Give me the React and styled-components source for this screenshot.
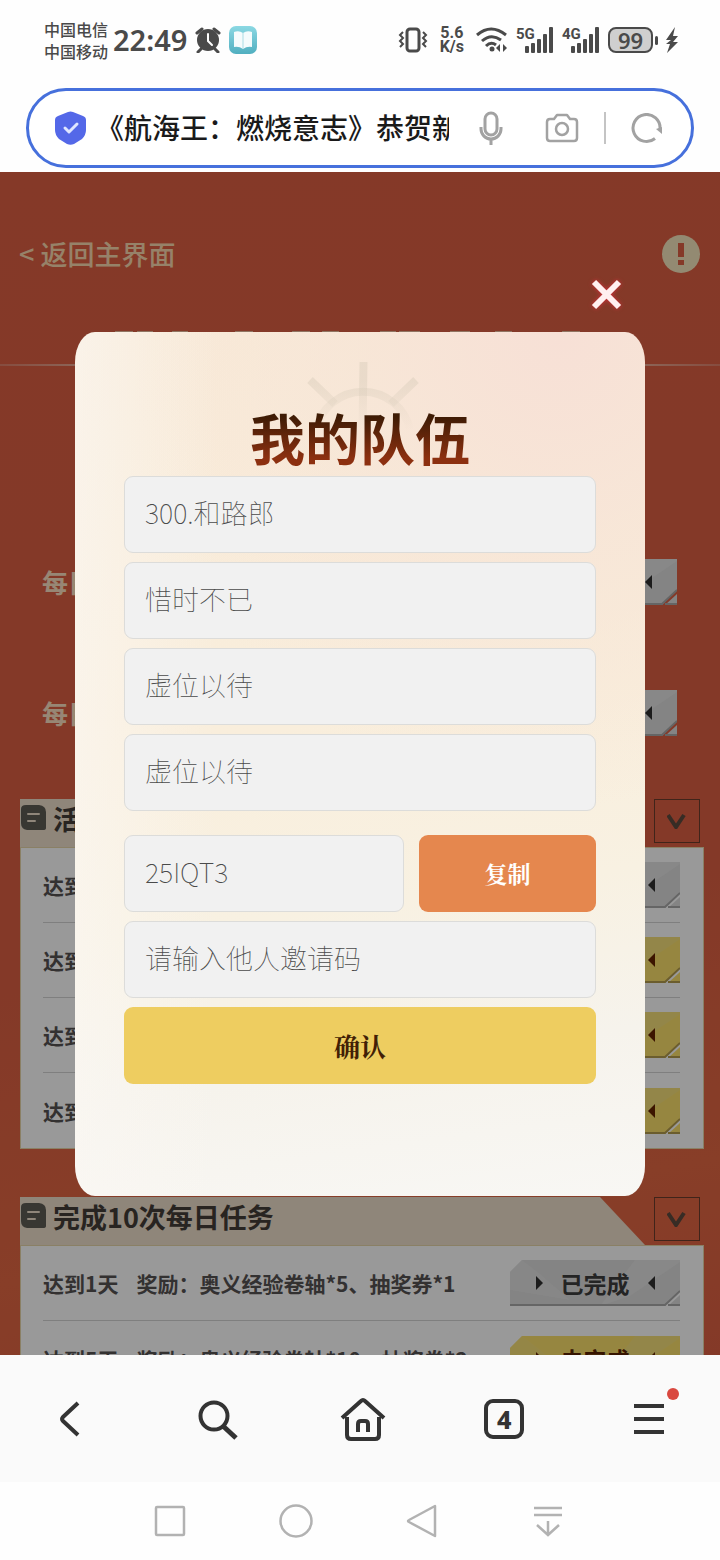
import React from "react";
import styled, { createGlobalStyle } from "styled-components";

const sans = '"Noto Sans CJK SC", sans-serif';
const latin = '"Noto Sans", "Noto Sans CJK SC", sans-serif';
const serif = '"Noto Serif CJK SC", "Noto Sans CJK SC", serif';

const GlobalStyle = createGlobalStyle`
  * { box-sizing: border-box; }
  body { margin: 0; font-family: ${sans}; background: #fefefe; }
  button { border: 0; padding: 0; background: none; font-family: inherit; cursor: pointer; }
  svg { display: block; flex: none; }
  h1, h2, p { margin: 0; }
`;

const Screen = styled.div`
  display: flex;
  flex-direction: column;
  height: 100vh;
`;

/* ---------- status bar ---------- */

const StatusBar = styled.header`
  display: flex;
  align-items: center;
  justify-content: space-between;
  height: 80px;
  padding: 0 42px 0 44px;
  color: #4a4a4a;
`;

const StatusGroup = styled.div`
  display: flex;
  align-items: center;
  gap: ${(p) => p.$gap}px;
`;

const Carriers = styled.div`
  font-size: 16px;
  font-weight: 500;
  line-height: 22px;
`;

const Clock = styled.time`
  font-family: ${latin};
  font-size: 29px;
  font-weight: 600;
  line-height: 40px;
`;

const Speed = styled.div`
  font-family: Roboto, sans-serif;
  font-size: 16px;
  font-weight: 700;
  line-height: 14px;
  text-align: center;
`;

const SignalBox = styled.div`
  position: relative;
  padding-left: 9px;
`;

const SignalLabel = styled.span`
  position: absolute;
  left: 0;
  top: 0;
  font-family: Roboto, sans-serif;
  font-size: 15px;
  font-weight: 700;
  line-height: 14px;
`;

const Battery = styled.div`
  display: flex;
  align-items: center;
  gap: 2px;
  &::after {
    content: "";
    width: 3px;
    height: 9px;
    border-radius: 2px;
    background: #4a4a4a;
  }
`;

const BatteryLevel = styled.span`
  width: 45px;
  height: 26px;
  border: 2px solid #4a4a4a;
  border-radius: 8px;
  background: #cfcfcf;
  font-family: ${latin};
  font-size: 22px;
  font-weight: 600;
  line-height: 22px;
  text-align: center;
`;

function Signal({ label }) {
  return (
    <SignalBox>
      <SignalLabel>{label}</SignalLabel>
      <svg width="29" height="26" viewBox="0 0 29 26" fill="#4a4a4a">
        <rect x="0" y="19" width="4" height="7" rx="1" />
        <rect x="6" y="16" width="4" height="10" rx="1" />
        <rect x="12" y="12" width="4" height="14" rx="1" />
        <rect x="18" y="7" width="4" height="19" rx="1" />
        <rect x="24" y="0" width="4" height="26" rx="1" />
      </svg>
    </SignalBox>
  );
}

/* ---------- address bar ---------- */

const AddressBar = styled.form`
  display: flex;
  align-items: center;
  height: 80px;
  flex: none;
  margin: 8px 26px 4px;
  padding: 0 29px 0 26px;
  border: 3px solid #4670dc;
  border-radius: 40px;
  background: #fff;
`;

const AddressInput = styled.input`
  flex: 1;
  min-width: 0;
  margin: 0 30px 0 10px;
  padding: 0 0 2px;
  border: 0;
  outline: 0;
  background: none;
  color: #1a1a1a;
  font: 500 28px/40px ${sans};
`;

const AddressActions = styled.div`
  display: flex;
  align-items: center;
  gap: 25px;
`;

const ActionPair = styled.div`
  display: flex;
  align-items: center;
  gap: 42px;
`;

const ActionDivider = styled.span`
  width: 2px;
  height: 32px;
  background: #c4c4c4;
`;

/* ---------- web page under the dialog ---------- */

const Viewport = styled.main`
  position: relative;
  flex: 1;
  min-height: 0;
  overflow: hidden;
  background: linear-gradient(170deg, #de6044 0%, #dc5f44 60%, #e36844 85%, #dd6044 100%);
`;

const PageNav = styled.nav`
  display: flex;
  align-items: center;
  justify-content: space-between;
  padding: 63px 20px 0 19px;
`;

const BackLink = styled.a`
  color: #fbd9b0;
  font-size: 27px;
  font-weight: 500;
  line-height: 38px;
  text-decoration: none;
`;

const Banner = styled.svg`
  width: 100%;
  height: 6px;
  margin-top: 57px;
`;

const BannerRule = styled.hr`
  height: 2px;
  margin: 28px 0 0;
  border: 0;
  background: linear-gradient(90deg, #e0806a, #f2c9b4 20%, #f2c9b4 80%, #e0806a);
`;

const DailyList = styled.section`
  display: flex;
  flex-direction: column;
  gap: 85px;
  margin: 193px 43px 63px 42px;
`;

const DailyRow = styled.div`
  display: flex;
  align-items: center;
  justify-content: space-between;
  color: #fce2c4;
  font-size: 26px;
  font-weight: 700;
  line-height: 44px;
`;

const Section = styled.section`
  margin: 0 16px 48px 20px;
`;

const SectionHead = styled.div`
  display: flex;
  align-items: flex-start;
  height: 48px;
  padding-right: 4px;
`;

const SectionTitle = styled.h2`
  display: flex;
  flex: 1;
  gap: 7px;
  height: 48px;
  margin-right: 9px;
  padding-left: 1px;
  background: #eedfcb;
  clip-path: polygon(0 0, calc(100% - 45px) 0, 100% 100%, 0 100%);
  color: #443c38;
  font-size: 27px;
  font-weight: 700;
  line-height: 40px;
  svg { margin-top: 6px; }
`;

const FoldButton = styled.button`
  display: grid;
  place-items: center;
  width: 46px;
  height: 44px;
  border: 1px solid #6b3c2c;
`;

const Card = styled.div`
  padding: 0 23px 0 22px;
  border: 1px solid #e6d6a8;
  background: #fff;
`;

const TaskRow = styled.div`
  display: flex;
  align-items: center;
  justify-content: space-between;
  height: 75px;
  border-bottom: 1px solid #d4d4d4;
  color: #565252;
  font-size: 21px;
  font-weight: 700;
  &:last-child { border-bottom: 0; }
`;

const TaskText = styled.p`
  display: flex;
  gap: 18px;
`;

const BadgeButton = styled.button`
  position: relative;
  width: 170px;
  height: 46px;
  color: ${(p) => (p.$done ? "#3c3c3c" : "#5a2200")};
  font-size: 23px;
  font-weight: 700;
  line-height: 46px;
`;

const BadgeShape = styled.svg`
  position: absolute;
  inset: 0;
`;

const BadgeLabel = styled.span`
  position: relative;
`;

function StateButton({ done }) {
  const ink = done ? "#303030" : "#642400";
  const base = done ? "#dcdcdc" : "#fbe06c";
  const shine = done ? "#e8e8e8" : "#f2df86";
  const edge = done ? "#a8a8a8" : "#b39b4e";
  return (
    <BadgeButton type="button" $done={done}>
      <BadgeShape width="170" height="46" viewBox="0 0 170 46">
        <path d="M12 0H170V31L155 46H0V12Z" fill={base} />
        <path d="M90 46L125 0H170V2L120 36Z" fill={shine} opacity=".6" />
        <path d="M12 0L0 12V30L60 40L30 14Z" fill={shine} opacity=".4" />
        <path d="M170 31L155 45H0" fill="none" stroke={edge} strokeWidth="2" />
        <path d="M170 35V46H158Z" fill={base} />
        <path d="M170 45H158" stroke={edge} strokeWidth="2" />
        <path d="M26 16L33 23L26 30Z" fill={ink} />
        <path d="M145 16L138 23L145 30Z" fill={ink} />
      </BadgeShape>
      <BadgeLabel>{done ? "已完成" : "未完成"}</BadgeLabel>
    </BadgeButton>
  );
}

function Task({ goal, reward, done }) {
  return (
    <TaskRow>
      <TaskText>
        <span>{goal}</span>
        {reward && <span>{reward}</span>}
      </TaskText>
      <StateButton done={done} />
    </TaskRow>
  );
}

function TaskSection({ title, tasks }) {
  return (
    <Section>
      <SectionHead>
        <SectionTitle>
          <svg width="25" height="25" viewBox="0 0 25 25">
            <path d="M5 0H18Q25 1 25 7V23Q25 25 22 25H6Q0 24 0 18V4Q0 0 5 0Z" fill="#5e5c54" />
            <path d="M7 9H18M7 16H14" stroke="#eedfcb" strokeWidth="2" strokeLinecap="round" />
          </svg>
          {title}
        </SectionTitle>
        <FoldButton type="button" aria-label="展开">
          <svg width="20" height="16" viewBox="0 0 20 16">
            <path d="M1 2L9 14L17 2" fill="none" stroke="#5c4a3e" strokeWidth="4" />
          </svg>
        </FoldButton>
      </SectionHead>
      <Card>
        {tasks.map((t, i) => (
          <Task key={i} {...t} />
        ))}
      </Card>
    </Section>
  );
}

/* ---------- team dialog ---------- */

const Backdrop = styled.div`
  position: absolute;
  inset: 0;
  display: flex;
  flex-direction: column;
  gap: 21px;
  padding: 106px 75px 0;
  background: rgba(0, 0, 0, 0.4);
`;

const CloseButton = styled.button`
  align-self: flex-end;
  margin-right: 22px;
  filter: drop-shadow(0 0 2px #d8303c);
`;

const Dialog = styled.section`
  position: relative;
  display: flex;
  flex-direction: column;
  gap: 9px;
  padding: 72px 49px 112px;
  border-radius: 20px / 30px;
  background:
    linear-gradient(90deg, rgba(251, 248, 244, 0.6), rgba(251, 248, 244, 0) 25%),
    radial-gradient(ellipse 75% 55% at 85% 0%, #f7e0d6, rgba(247, 228, 214, 0.7) 45%, rgba(248, 236, 220, 0) 100%),
    linear-gradient(172deg, #f8ead8 0%, #f9eedc 45%, #f8f1e2 65%, #f6f3ec 82%, #f8f7f4 100%);
`;

const Wheel = styled.svg`
  position: absolute;
  top: 28px;
  left: calc(50% - 57px);
`;

const DialogTitle = styled.h1`
  position: relative;
  margin-bottom: -1px;
  background: linear-gradient(180deg, #3f1c05 20%, #8c3010 85%);
  background-clip: text;
  -webkit-background-clip: text;
  color: transparent;
  font-size: 55px;
  font-weight: 700;
  line-height: 64px;
  text-align: center;
`;

const Field = styled.input`
  display: block;
  width: 100%;
  min-width: 0;
  height: 77px;
  padding: 0 20px 4px;
  border: 1px solid #dcdcda;
  border-radius: 9px;
  outline: 0;
  background: #f1f1f1;
  color: #4a4a4a;
  font: 100 27px/40px ${sans};
  &::placeholder { color: #4a4a4a; opacity: 1; }
`;

const CodeRow = styled.div`
  display: grid;
  grid-template-columns: 280fr 177fr;
  gap: 15px;
  margin-top: 15px;
`;

const ActionButton = styled.button`
  height: 77px;
  border-radius: 9px;
  background: ${(p) => (p.$primary ? "#eecd60" : "#e5874e")};
  color: ${(p) => (p.$primary ? "#421f06" : "#fff")};
  font-family: ${serif};
  font-size: ${(p) => (p.$primary ? 26 : 23)}px;
  font-weight: 700;
`;

/* ---------- bottom bars ---------- */

const ToolBar = styled.nav`
  display: flex;
  flex: none;
  align-items: center;
  justify-content: space-between;
  height: 127px;
  padding: 0 47px 0 46px;
  background: #fafafa;
`;

const SystemBar = styled.nav`
  display: flex;
  flex: none;
  align-items: center;
  justify-content: space-between;
  height: 78px;
  padding: 0 148px 0 146px;
  background: #fefefe;
`;

const BarButton = styled.button`
  position: relative;
  display: grid;
  place-items: center;
  width: 48px;
  height: 48px;
`;

const TabCount = styled.span`
  width: 40px;
  height: 40px;
  border: 4px solid #333;
  border-radius: 9px;
  color: #333;
  font-family: ${latin};
  font-size: 25px;
  font-weight: 800;
  line-height: 32px;
  text-align: center;
`;

const Dot = styled.span`
  position: absolute;
  top: -7px;
  right: -6px;
  width: 12px;
  height: 12px;
  border-radius: 50%;
  background: #d9483f;
`;

const members = ["300.和路郎", "惜时不已", "虚位以待", "虚位以待"];

const activityTasks = [
  { goal: "达到", done: true },
  { goal: "达到", done: false },
  { goal: "达到", done: false },
  { goal: "达到", done: false },
];

const dailyTasks = [
  { goal: "达到1天", reward: "奖励：奥义经验卷轴*5、抽奖券*1", done: true },
  { goal: "达到5天", reward: "奖励：奥义经验卷轴*10、抽奖券*2", done: false },
];

export default function App() {
  return (
    <Screen>
      <GlobalStyle />
      <StatusBar>
        <StatusGroup $gap={8}>
          <StatusGroup $gap={5}>
            <Carriers>
              <div>中国电信</div>
              <div>中国移动</div>
            </Carriers>
            <Clock>22:49</Clock>
          </StatusGroup>
          <svg width="26" height="26" viewBox="0 0 26 26">
            <circle cx="13" cy="13" r="11" fill="#4a4a4a" />
            <path d="M2 6L7 2M24 6L19 2M6 22L3 25M20 22L23 25" stroke="#4a4a4a" strokeWidth="3" strokeLinecap="round" />
            <path d="M13 7V14L17 18" fill="none" stroke="#fff" strokeWidth="2" strokeLinecap="round" />
          </svg>
          <svg width="28" height="28" viewBox="0 0 28 28">
            <defs>
              <linearGradient id="book" x1="0" y1="0" x2="0" y2="1">
                <stop offset="0" stopColor="#8bd8e3" />
                <stop offset="1" stopColor="#51afc0" />
              </linearGradient>
            </defs>
            <rect width="28" height="28" rx="7" fill="url(#book)" />
            <path d="M5 6Q10 4 14 7Q18 4 23 6V21Q18 20 14 23Q10 20 5 21Z" fill="#f4fbfc" />
            <path d="M14 7V23" stroke="#a9dce4" />
          </svg>
        </StatusGroup>
        <StatusGroup $gap={8}>
          <StatusGroup $gap={12}>
            <svg width="30" height="26" viewBox="0 0 30 26" fill="none" stroke="#4a4a4a">
              <rect x="9" y="2" width="12" height="22" rx="3" strokeWidth="3" />
              <path d="M5 5L2 8L5 11L2 14L5 17L2 20M25 5L28 8L25 11L28 14L25 17L28 20" strokeWidth="2" />
            </svg>
            <Speed>
              <div>5.6</div>
              <div>K/s</div>
            </Speed>
            <svg width="32" height="26" viewBox="0 0 32 26" fill="none" stroke="#4a4a4a" strokeWidth="3">
              <path d="M1 8Q15 -4 30 8M6 14Q15 6 25 13M10 19Q15 14 20 18" />
              <circle cx="16" cy="22" r="2.5" fill="#4a4a4a" stroke="none" />
              <path d="M24 17V25L20 21ZM27 17V25L31 21Z" fill="#4a4a4a" stroke="none" />
            </svg>
          </StatusGroup>
          <Signal label="5G" />
          <Signal label="4G" />
          <Battery>
            <BatteryLevel>99</BatteryLevel>
          </Battery>
          <svg width="12" height="26" viewBox="0 0 12 26" fill="#4a4a4a">
            <path d="M9 0L0 13H5L0 17H4L1 26L12 15H7L12 9H7Z" />
          </svg>
        </StatusGroup>
      </StatusBar>

      <AddressBar>
        <svg width="31" height="34" viewBox="0 0 31 34">
          <path d="M13 1Q15.500 0 18 1L28 5Q31 6 31 9V19Q31 24 27 28L19 33Q15.500 34.500 12 33L4 28Q0 24 0 19V9Q0 6 3 5Z" fill="#5468e8" />
          <path d="M10 17L14 21L22 13" fill="none" stroke="#dfe6ff" strokeWidth="3" strokeLinecap="round" strokeLinejoin="round" />
        </svg>
        <AddressInput aria-label="网址" readOnly value="《航海王：燃烧意志》恭贺新" />
        <AddressActions>
          <ActionPair>
            <button type="button" aria-label="语音">
              <svg width="24" height="34" viewBox="0 0 24 34" fill="none" stroke="#a2a2a2" strokeWidth="3">
                <rect x="6" y="2" width="12" height="22" rx="6" />
                <path d="M2 16V18A10 10 0 0 0 22 18V16M12 28V34" />
              </svg>
            </button>
            <button type="button" aria-label="拍照">
              <svg width="34" height="30" viewBox="0 0 34 30" fill="none" stroke="#a2a2a2" strokeWidth="2.500">
                <path d="M5 6H9L12 2H22L25 6H29Q32 6 32 9V25Q32 28 29 28H5Q2 28 2 25V9Q2 6 5 6Z" strokeLinejoin="round" />
                <circle cx="17" cy="16" r="6" />
              </svg>
            </button>
          </ActionPair>
          <ActionDivider />
          <button type="button" aria-label="刷新">
            <svg width="31" height="31" viewBox="0 0 31 31">
              <path d="M24 25.500A13.500 13.500 0 1 1 29 16" fill="none" stroke="#a2a2a2" strokeWidth="3" />
              <path d="M25 16L31 14V21Z" fill="#a2a2a2" />
            </svg>
          </button>
        </AddressActions>
      </AddressBar>

      <Viewport>
        <PageNav>
          <BackLink href="#">&lt; 返回主界面</BackLink>
          <svg width="38" height="38" viewBox="0 0 38 38">
            <circle cx="19" cy="19" r="19" fill="#f6e6bf" />
            <path d="M16 8H22V22H16ZM16 25H22V30H16Z" fill="#de6044" />
          </svg>
        </PageNav>
        <Banner viewBox="0 0 720 6" preserveAspectRatio="none">
          <path
            d="M115 3H133M137 3H153M172 3H188M235 3H253M292 3H310M322 3H339M380 3H396M399 3H420M450 3H470M495 3H512M562 3H580"
            stroke="#f0c3a4"
            strokeWidth="4"
          />
        </Banner>
        <BannerRule />
        <DailyList>
          <DailyRow>
            每日
            <StateButton done />
          </DailyRow>
          <DailyRow>
            每日
            <StateButton done />
          </DailyRow>
        </DailyList>
        <TaskSection title="活动" tasks={activityTasks} />
        <TaskSection title="完成10次每日任务" tasks={dailyTasks} />

        <Backdrop>
          <CloseButton type="button" aria-label="关闭">
            <svg width="33" height="33" viewBox="0 0 33 33">
              <path d="M4 4L29 29M29 4L4 29" stroke="#fff0f0" strokeWidth="6" />
            </svg>
          </CloseButton>
          <Dialog role="dialog" aria-labelledby="team-title">
            <Wheel width="120" height="70" viewBox="0 0 120 70">
              <defs>
                <linearGradient id="wheel" gradientUnits="userSpaceOnUse" x1="0" y1="0" x2="0" y2="70">
                  <stop offset="0.300" stopColor="#d8ccba" stopOpacity="0.450" />
                  <stop offset="1" stopColor="#d8ccba" stopOpacity="0" />
                </linearGradient>
              </defs>
              <g fill="none" stroke="url(#wheel)" strokeWidth="8">
                <path d="M13 70A48 48 0 0 1 107 70" />
                <path d="M60.500 2L59.500 70M7 20L32 44M113 20L88 44" />
              </g>
            </Wheel>
            <DialogTitle id="team-title">我的队伍</DialogTitle>
            {members.map((name, i) => (
              <Field key={i} readOnly value={name} aria-label={`队员${i + 1}`} />
            ))}
            <CodeRow>
              <Field readOnly value="25IQT3" aria-label="邀请码" />
              <ActionButton type="button">复制</ActionButton>
            </CodeRow>
            <Field placeholder="请输入他人邀请码" aria-label="他人邀请码" />
            <ActionButton type="button" $primary>确认</ActionButton>
          </Dialog>
        </Backdrop>
      </Viewport>

      <ToolBar>
        <BarButton type="button" aria-label="后退">
          <svg width="24" height="38" viewBox="0 0 24 38">
            <path d="M20 3L5 17Q3 19 5 21L20 35" fill="none" stroke="#333" strokeWidth="4" />
          </svg>
        </BarButton>
        <BarButton type="button" aria-label="搜索">
          <svg width="48" height="48" viewBox="-6 -4 48 48" fill="none" stroke="#333" strokeWidth="4">
            <circle cx="17" cy="17" r="13.500" />
            <path d="M26 27L39 39" strokeWidth="5" />
          </svg>
        </BarButton>
        <BarButton type="button" aria-label="主页">
          <svg width="50" height="44" viewBox="-4 0 50 44" fill="none" stroke="#333" strokeWidth="4">
            <path d="M2 21L21 4Q23 2 25 4L44 21" />
            <path d="M7 20V38Q7 42 11 42H35Q39 42 39 38V20" />
            <path d="M18 35V27Q18 24 21 24H25Q28 24 28 27V35" />
          </svg>
        </BarButton>
        <BarButton type="button" aria-label="标签页">
          <TabCount>4</TabCount>
        </BarButton>
        <BarButton type="button" aria-label="菜单">
          <svg width="30" height="32" viewBox="0 0 30 32">
            <path d="M0 3H30M0 16H30M0 29H30" stroke="#333" strokeWidth="4" />
          </svg>
          <Dot />
        </BarButton>
      </ToolBar>

      <SystemBar>
        <BarButton type="button" aria-label="最近任务">
          <svg width="32" height="32" viewBox="0 0 32 32">
            <rect x="2" y="2" width="28" height="28" rx="1" fill="none" stroke="#b2b2b2" strokeWidth="2.500" />
          </svg>
        </BarButton>
        <BarButton type="button" aria-label="桌面">
          <svg width="34" height="34" viewBox="0 0 34 34">
            <circle cx="17" cy="17" r="15.500" fill="none" stroke="#b2b2b2" strokeWidth="2.500" />
          </svg>
        </BarButton>
        <BarButton type="button" aria-label="返回">
          <svg width="32" height="34" viewBox="0 0 32 34">
            <path d="M29 2V32L3 18Q1 17 3 16Z" fill="none" stroke="#b2b2b2" strokeWidth="2.500" strokeLinejoin="round" />
          </svg>
        </BarButton>
        <BarButton type="button" aria-label="通知">
          <svg width="28" height="32" viewBox="0 0 28 32">
            <path d="M0 3H28M0 10H28M14 16V29M3 20L14 30L25 20" fill="none" stroke="#b2b2b2" strokeWidth="2.500" />
          </svg>
        </BarButton>
      </SystemBar>
    </Screen>
  );
}
